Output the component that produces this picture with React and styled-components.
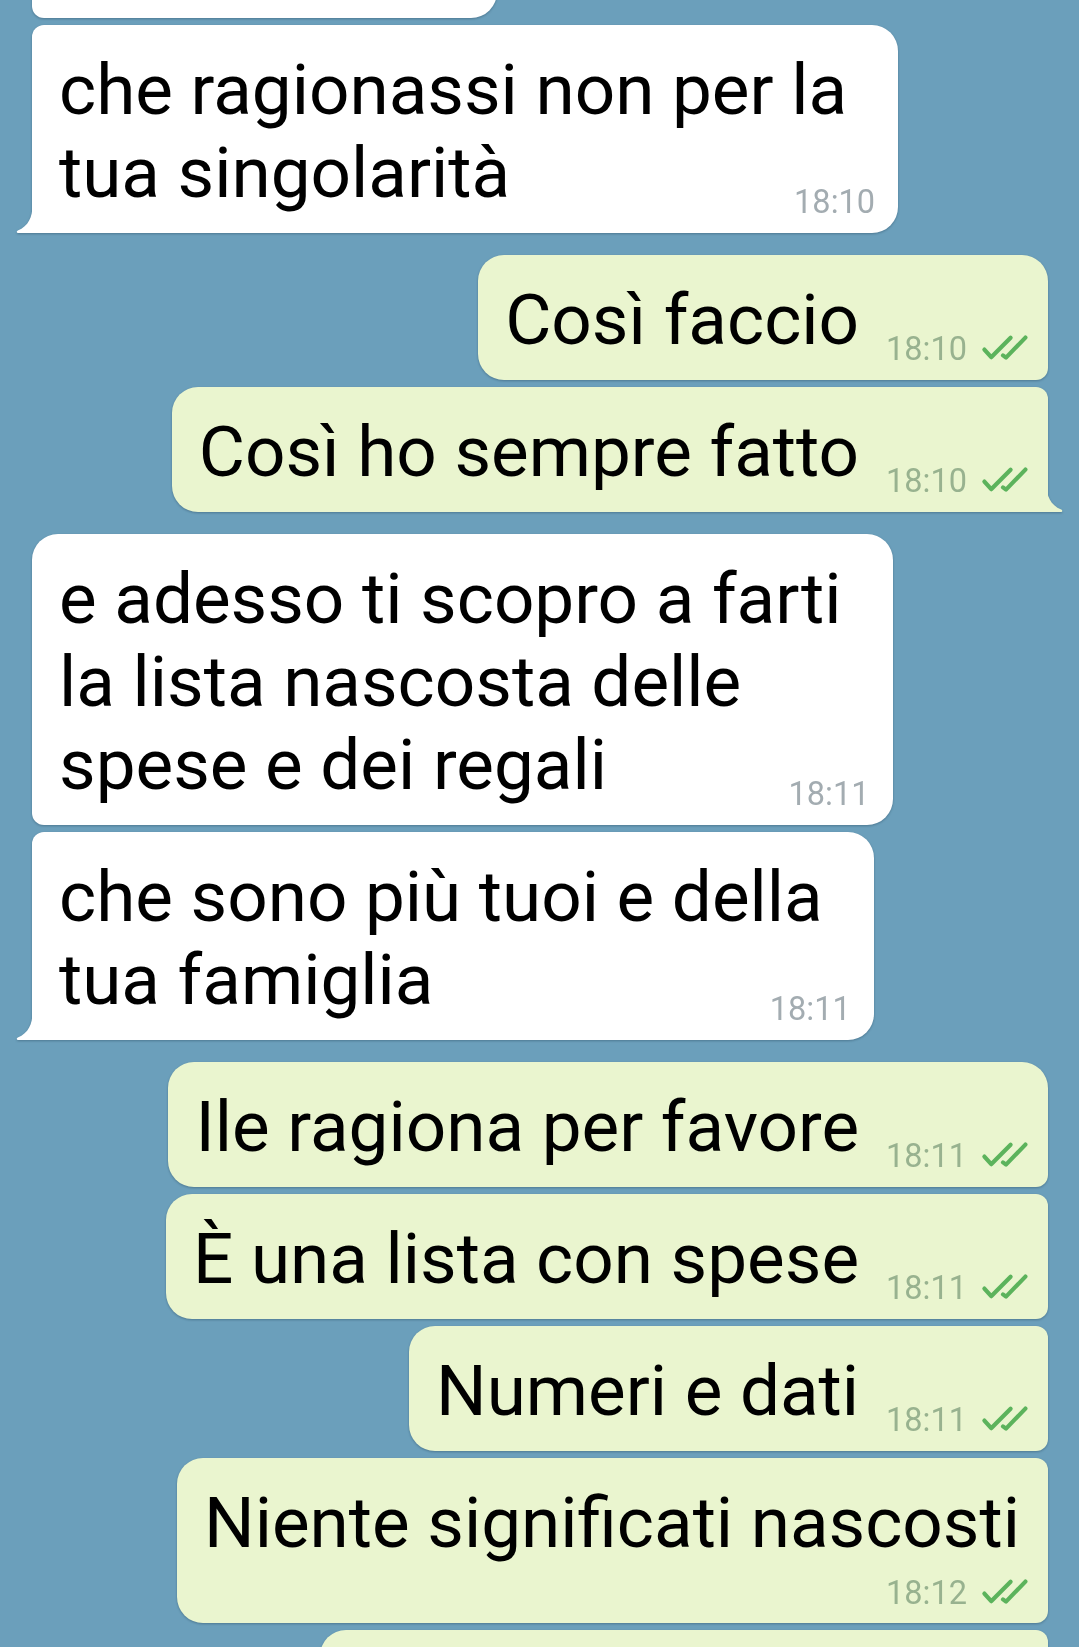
import React from 'react';
import styled, { createGlobalStyle } from 'styled-components';

const GlobalStyle = createGlobalStyle`
  html, body {
    margin: 0;
    padding: 0;
    background: #6b9fbb;
  }
  body {
    font-family: Roboto, "Noto Sans", "Liberation Sans", sans-serif;
    -webkit-font-smoothing: antialiased;
  }
`;

const Viewport = styled.div`
  height: 1647px;
  overflow: hidden;
  background: #6b9fbb;
`;

/* the negative top margin is the chat's scroll position */
const Feed = styled.div`
  display: flex;
  flex-direction: column;
  padding: 0 31px 0 32px;
  margin-top: -107px;
`;

const BIG = 26;
const SMALL = 12;

const radius = (p) => {
  if (p.$out) {
    const tr = p.$first ? BIG : SMALL;
    const br = p.$last ? 0 : SMALL;
    return `${BIG}px ${tr}px ${br}px ${BIG}px`;
  }
  const tl = p.$first ? BIG : SMALL;
  const bl = p.$last ? 0 : SMALL;
  return `${tl}px ${BIG}px ${BIG}px ${bl}px`;
};

const Bubble = styled.div`
  position: relative;
  box-sizing: border-box;
  flex-shrink: 0;
  display: flex;
  flex-direction: column;
  align-self: ${(p) => (p.$out ? 'flex-end' : 'flex-start')};
  margin-top: ${(p) => p.$gap}px;
  width: ${(p) => (p.$width ? `${p.$width}px` : 'auto')};
  padding: 23px ${(p) => (p.$out ? 20 : 23)}px ${(p) => (p.$metaBelow ? 14 : 19)}px 27px;
  background: ${(p) => (p.$out ? '#eaf5cf' : '#ffffff')};
  border-radius: ${radius};
  filter: drop-shadow(0 1.2px 0.8px rgba(20, 50, 70, 0.35));
`;

const Line = styled.div`
  font-size: 71px;
  line-height: 83px;
  color: #000;
  white-space: nowrap;
  margin-right: ${(p) => p.$pad || 0}px;
`;

const LastRow = styled.div`
  display: flex;
  align-items: flex-end;
  justify-content: space-between;
  gap: 27px;
`;

const Meta = styled.div`
  display: flex;
  align-items: flex-end;
  gap: 14px;
  flex-shrink: 0;
  margin-bottom: ${(p) => (p.$below ? 0 : -4)}px;
  margin-top: ${(p) => (p.$below ? 13 : 0)}px;
  align-self: flex-end;
`;

const Time = styled.span`
  font-size: 32.5px;
  line-height: 32px;
  color: ${(p) => (p.$out ? '#98b28f' : '#a3acb1')};
  white-space: nowrap;
`;

const CheckIcon = styled.svg`
  display: block;
  width: 47px;
  height: 27px;
  margin-bottom: 4px;
`;

const TailSvg = styled.svg`
  position: absolute;
  bottom: 0;
  width: 18px;
  height: 28px;
  ${(p) => (p.$out ? 'right: -15px; transform: scaleX(-1);' : 'left: -16px;')}
`;

const Tail = ({ out }) => (
  <TailSvg $out={out} viewBox="0 0 18 28">
    <path
      d="M16.5 0 C16.5 12 12.5 21 1.8 25.6 C0.2 26.3 0.4 28 2.2 28 L18 28 L18 0 Z"
      fill={out ? '#eaf5cf' : '#ffffff'}
    />
  </TailSvg>
);

const DoubleCheck = () => (
  <CheckIcon viewBox="0 0 47 27">
    <g fill="none" stroke="#5cb35c" strokeWidth="4.2" strokeLinecap="round" strokeLinejoin="round">
      <path d="M3.4 15.6 L10.2 23.2 L29.6 3.8" />
      <path d="M22 21.4 L25 23.6 L44.4 3.6" />
    </g>
  </CheckIcon>
);

const messages = [
  { out: false, partial: true, width: 465, gap: 0 },
  { out: false, lines: ['che ragionassi non per la', 'tua singolarità'], time: '18:10', gap: 7, last: true },
  { out: true, lines: ['Così faccio'], time: '18:10', gap: 22, first: true },
  { out: true, lines: ['Così ho sempre fatto'], time: '18:10', gap: 7, last: true },
  {
    out: false,
    lines: ['e adesso ti scopro a farti', 'la lista nascosta delle', 'spese e dei regali'],
    time: '18:11',
    gap: 22,
    first: true,
  },
  { out: false, lines: ['che sono più tuoi e della', 'tua famiglia'], time: '18:11', gap: 7, last: true },
  { out: true, lines: ['Ile ragiona per favore'], time: '18:11', gap: 22, first: true },
  { out: true, lines: ['È una lista con spese'], time: '18:11', gap: 7 },
  { out: true, lines: ['Numeri e dati'], time: '18:11', gap: 7 },
  { out: true, lines: ['Niente significati nascosti'], time: '18:12', gap: 7, metaBelow: true },
  { out: true, partial: true, width: 728, gap: 7 },
];

const MetaBlock = ({ m, below }) => (
  <Meta $below={below}>
    <Time $out={m.out}>{m.time}</Time>
    {m.out && <DoubleCheck />}
  </Meta>
);

const Message = ({ m }) => {
  const common = {
    $out: m.out,
    $first: m.first,
    $last: m.last,
    $gap: m.gap,
    $width: m.width,
    $metaBelow: m.metaBelow,
  };

  if (m.partial) {
    return (
      <Bubble {...common}>
        <Line>{'\u00a0'}</Line>
      </Bubble>
    );
  }

  const head = m.lines.slice(0, -1);
  const tail = m.lines[m.lines.length - 1];

  return (
    <Bubble {...common}>
      {head.map((l, i) => (
        <Line key={i} $pad={28}>
          {l}
        </Line>
      ))}
      {m.metaBelow ? (
        <>
          <Line $pad={8}>{tail}</Line>
          <MetaBlock m={m} below />
        </>
      ) : (
        <LastRow>
          <Line>{tail}</Line>
          <MetaBlock m={m} />
        </LastRow>
      )}
      {m.last && <Tail out={m.out} />}
    </Bubble>
  );
};

export default function App() {
  return (
    <>
      <GlobalStyle />
      <Viewport>
        <Feed>
          {messages.map((m, i) => (
            <Message key={i} m={m} />
          ))}
        </Feed>
      </Viewport>
    </>
  );
}
